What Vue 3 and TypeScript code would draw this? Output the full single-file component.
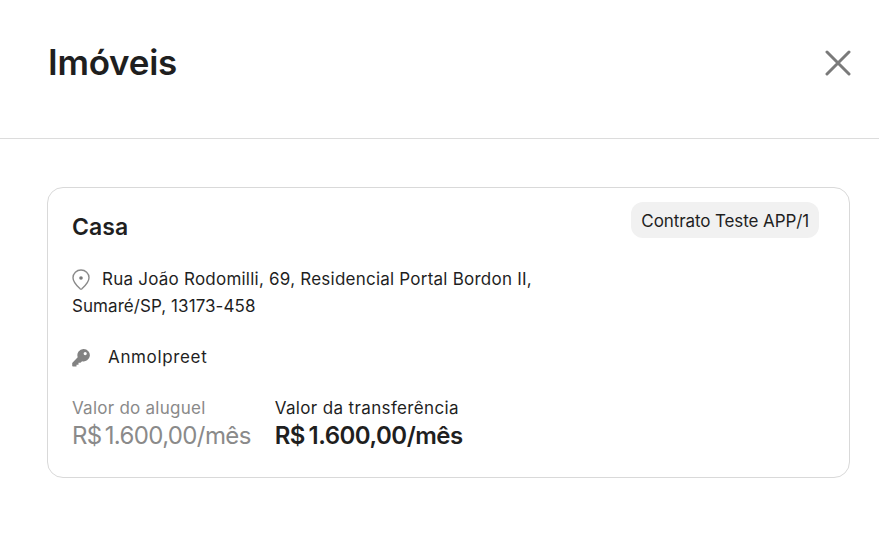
<script setup lang="ts">
const title = 'Imóveis'
</script>

<template>
  <div class="page">
    <header class="header">
      <h1 class="title">{{ title }}</h1>
      <button class="close" aria-label="Fechar">
        <svg width="26" height="26" viewBox="0 0 26 26" fill="none">
          <path d="M2 2L24 24M24 2L2 24" stroke="#7a7a7a" stroke-width="3" stroke-linecap="round" />
        </svg>
      </button>
    </header>

    <section class="content">
      <article class="card">
        <div class="card-top">
          <h2 class="name">Casa</h2>
          <span class="tag">Contrato Teste APP/1</span>
        </div>

        <p class="address">
          <span class="line-one"><svg class="pin" width="18" height="21" viewBox="0 0 18 21" fill="none">
            <path d="M9 1C4.600 1 1 4.500 1 8.800c0 4.600 4.300 8.300 7 10.900.6.500 1.400.500 2 0 2.700-2.600 7-6.300 7-10.900C17 4.500 13.400 1 9 1z" stroke="#8a8a8a" stroke-width="1.400" />
            <circle cx="9" cy="9" r="1.800" fill="#7a7a7a" />
          </svg>Rua João Rodomilli, 69, Residencial Portal Bordon II,</span>
          <span class="line-two">Sumaré/SP, 13173-458</span>
        </p>

        <div class="owner">
          <svg width="18" height="18" viewBox="0 0 18 18">
            <path d="M11.700 0a6.200 6.200 0 1 1-1.600 12.200L8.500 13.800h-2v2h-2v1.700H1a.8.800 0 0 1-.8-.8V14l5.500-5.800A6.200 6.200 0 0 1 11.700 0zM13.200 3a1.600 1.600 0 1 0 0 3.200 1.600 1.600 0 0 0 0-3.200z" fill="#828282" fill-rule="evenodd" />
          </svg>
          <span>Anmolpreet</span>
        </div>

        <div class="values">
          <div class="value muted">
            <span class="label">Valor do aluguel</span>
            <span class="amount">R$ 1.600,00/mês</span>
          </div>
          <div class="value">
            <span class="label dark">Valor da transferência</span>
            <span class="amount strong">R$ 1.600,00/mês</span>
          </div>
        </div>
      </article>
    </section>
  </div>
</template>

<style scoped>
.page {
  width: 879px;
  height: 537px;
  background: #fff;
  color: #1f1f1f;
  font-family: Inter, "Noto Sans", sans-serif;
  overflow: hidden;
}
.header {
  height: 139px;
  box-sizing: border-box;
  border-bottom: 1px solid #dcdcdc;
  display: flex;
  align-items: flex-start;
  justify-content: space-between;
  padding: 40px 28px 0 48px;
}
.title {
  margin: 0;
  font-size: 35px;
  line-height: 44px;
  font-weight: 600;
  letter-spacing: -0.25px;
}
.close {
  border: 0;
  padding: 0;
  margin-top: 10px;
  background: none;
  display: flex;
}
.content {
  padding: 48px 29px 0 47px;
}
.card {
  height: 291px;
  box-sizing: border-box;
  border: 1px solid #d9d9d9;
  border-radius: 16px;
  padding: 14px 30px 0 24px;
}
.card-top {
  display: flex;
  justify-content: space-between;
  align-items: flex-start;
}
.name {
  margin: 11px 0 0;
  font-size: 23px;
  line-height: 29px;
  font-weight: 600;
  letter-spacing: 0.1px;
}
.tag {
  background: #f1f1f1;
  border-radius: 12px;
  padding: 0 10px;
  height: 36px;
  line-height: 38px;
  font-size: 17px;
  letter-spacing: -0.1px;
}
.address {
  margin: 24px 0 0;
  font-size: 17px;
  line-height: 27px;
}
.line-one,
.line-two {
  display: block;
}
.line-one {
  letter-spacing: 0.23px;
}
.line-two {
  letter-spacing: 0.07px;
}
.pin {
  vertical-align: -5px;
  margin-right: 12px;
}
.owner {
  margin-top: 24px;
  display: flex;
  align-items: center;
  gap: 18px;
  font-size: 17px;
  line-height: 27px;
  letter-spacing: 0.65px;
}
.values {
  margin-top: 25px;
  display: flex;
  gap: 24px;
}
.value {
  display: flex;
  flex-direction: column;
}
.label {
  font-size: 17px;
  line-height: 25px;
  letter-spacing: 0.25px;
}
.label.dark {
  letter-spacing: 0.36px;
}
.amount {
  font-size: 24px;
  line-height: 30px;
  letter-spacing: -0.63px;
  word-spacing: -3px;
}
.muted {
  color: #8a8a8a;
}
.amount.strong {
  font-weight: 600;
  letter-spacing: -0.5px;
  word-spacing: -2px;
}
</style>
